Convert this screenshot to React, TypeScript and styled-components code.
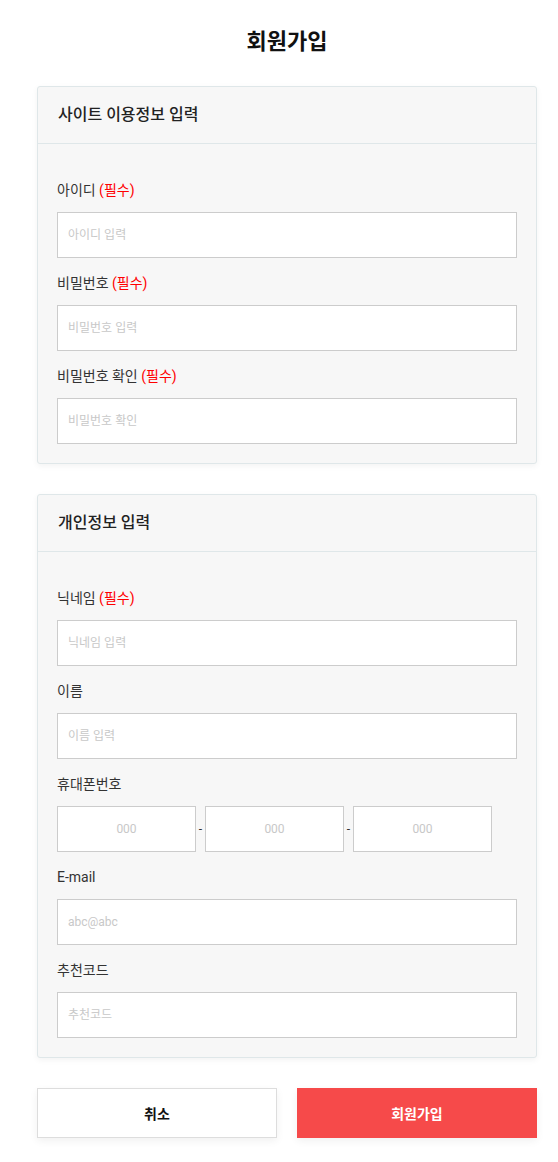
import styled, { createGlobalStyle } from "styled-components"

const GlobalStyle = createGlobalStyle`
  * {
    box-sizing: border-box;
  }
  body {
    margin: 0;
    background: #fff;
    font-family: Roboto, "Noto Sans CJK KR", "Noto Sans", sans-serif;
    color: #333;
  }
`

type FieldProps = {
  label: string
  required?: boolean
  placeholder: string
}

const Field: React.FC<FieldProps> = ({ label, required, placeholder }) => (
  <FieldRow>
    <Label>
      {label}
      {required && <Required> (필수)</Required>}
    </Label>
    <Input placeholder={placeholder} />
  </FieldRow>
)

const App: React.FC = () => (
  <>
    <GlobalStyle />
    <Page>
      <Title>회원가입</Title>
      <Card>
        <CardHeader>사이트 이용정보 입력</CardHeader>
        <CardBody>
          <Field label="아이디" required placeholder="아이디 입력" />
          <Field label="비밀번호" required placeholder="비밀번호 입력" />
          <Field label="비밀번호 확인" required placeholder="비밀번호 확인" />
        </CardBody>
      </Card>
      <Card>
        <CardHeader>개인정보 입력</CardHeader>
        <CardBody>
          <Field label="닉네임" required placeholder="닉네임 입력" />
          <Field label="이름" placeholder="이름 입력" />
          <FieldRow>
            <Label>휴대폰번호</Label>
            <PhoneRow>
              <PhoneInput placeholder="000" />
              <Dash>-</Dash>
              <PhoneInput placeholder="000" />
              <Dash>-</Dash>
              <PhoneInput placeholder="000" />
            </PhoneRow>
          </FieldRow>
          <Field label="E-mail" placeholder="abc@abc" />
          <Field label="추천코드" placeholder="추천코드" />
        </CardBody>
      </Card>
      <ButtonRow>
        <Button>취소</Button>
        <Button $primary>회원가입</Button>
      </ButtonRow>
    </Page>
  </>
)

const Page = styled.div`
  width: 500px;
  margin-left: 37px;
  padding: 28px 0 24px;
  display: flex;
  flex-direction: column;
`

const Title = styled.h1`
  margin: 0 0 30px;
  height: 28px;
  line-height: 28px;
  text-align: center;
  font-size: 22px;
  font-weight: 700;
  color: #111;
`

const Card = styled.section`
  background: #f7f7f7;
  border: 1px solid #dfe7e9;
  border-radius: 3px;
  box-shadow: 0 2px 6px rgba(0, 0, 0, 0.05);
  margin-bottom: 30px;
`

const CardHeader = styled.div`
  height: 57px;
  line-height: 56px;
  padding: 0 20px;
  border-bottom: 1px solid #dfe7e9;
  font-size: 16px;
  font-weight: 500;
  color: #222;
`

const CardBody = styled.div`
  padding: 21px 19px 19px;
`

const FieldRow = styled.div`
  padding-top: 15px;
`

const Label = styled.label`
  display: block;
  height: 20px;
  line-height: 20px;
  margin-bottom: 12px;
  font-size: 14px;
  color: #333;
`

const Required = styled.span`
  color: #ff0000;
`

const Input = styled.input`
  display: block;
  width: 100%;
  height: 46px;
  padding: 0 10px;
  border: 1px solid #cccccc;
  border-radius: 0;
  background: #fff;
  font-family: inherit;
  font-size: 12px;
  color: #333;
  outline: none;

  &::placeholder {
    color: #c8c8c8;
  }
`

const PhoneRow = styled.div`
  display: flex;
  align-items: center;
`

const PhoneInput = styled(Input)`
  width: 139px;
  text-align: center;
`

const Dash = styled.span`
  width: 9px;
  text-align: center;
  font-size: 12px;
  color: #333;
`

const ButtonRow = styled.div`
  display: flex;
  justify-content: space-between;
`

const Button = styled.button<{ $primary?: boolean }>`
  width: 240px;
  height: 50px;
  border: 1px solid ${({ $primary }) => ($primary ? "#f64a4a" : "#dddddd")};
  background: ${({ $primary }) => ($primary ? "#f64a4a" : "#fff")};
  color: ${({ $primary }) => ($primary ? "#fff" : "#111")};
  font-family: inherit;
  font-size: 14px;
  font-weight: 700;
  box-shadow: 0 3px 8px rgba(0, 0, 0, 0.06);
  cursor: pointer;
`

export default App
